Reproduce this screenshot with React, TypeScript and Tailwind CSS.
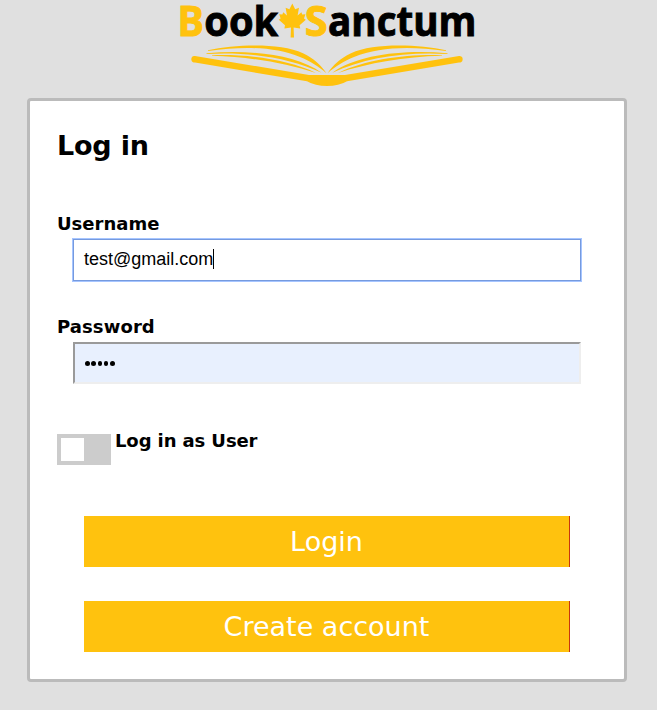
import React from "react";

const leaf =
  "M292.3 3.6 L295.2 9.2 L299 7.8 L297.6 15.4 L301.4 12.2 L302.2 14.6 L305.4 14.2 L304 18.4 L305.8 19.8 L299.6 25.2 L300.2 28.4 L293.6 27.6 L294 37.4 L290.6 37.4 L291 27.6 L284.4 28.4 L285 25.2 L278.8 19.8 L280.6 18.4 L279.2 14.2 L282.4 14.6 L283.2 12.2 L287 15.4 L285.6 7.8 L289.4 9.2 Z";

function BookHalf() {
  return (
    <g>
      <path d="M195 56 C192 55.5 191 58 191.4 60 C191.8 62 193 62.4 195 62.6 L307 81.2 Q315 86 327.2 86 L327.2 75 L309 75 Z" />
      <path d="M208 50.2 C235 44.5 280 42.5 303 53.2 C314 58.5 321 65 326.4 73.2 C318 66 310 61 300 57 C275 47 245 45.8 208 51 Z" />
      <path d="M206.5 53.3 C250 49.5 296 54.5 321.6 72.7 C290 58 250 51.5 206.5 54 Z" />
      <path d="M212 55.2 C248 54 288 59.5 316 72.9 C285 63 250 56.8 212 55.8 Z" />
    </g>
  );
}

function Logo() {
  return (
    <svg className="block h-[98px] w-[657px]" viewBox="0 0 657 98" role="img" aria-label="Book Sanctum">
      <g fontFamily="'Open Sans','Noto Sans',sans-serif" fontWeight="700" fontSize="41" strokeWidth="0.9">
        <text x="177.6" y="36.2" fill="#ffc20e" stroke="#ffc20e" textLength="26.5" lengthAdjust="spacingAndGlyphs">B</text>
        <text x="204.3" y="36.2" fill="#000" stroke="#000" textLength="74" lengthAdjust="spacingAndGlyphs">ook</text>
        <text x="304.8" y="36.2" fill="#ffc20e" stroke="#ffc20e" textLength="23" lengthAdjust="spacingAndGlyphs">S</text>
        <text x="328" y="36.2" fill="#000" stroke="#000" textLength="148.5" lengthAdjust="spacingAndGlyphs">anctum</text>
      </g>
      <g fill="#ffc20e">
        <path d={leaf} />
        <BookHalf />
        <g transform="translate(654 0) scale(-1 1)">
          <BookHalf />
        </g>
      </g>
    </svg>
  );
}

export default function App() {
  return (
    <div className="h-[710px] w-[657px] overflow-hidden bg-[#e0e0e0] font-['DejaVu_Sans',sans-serif] text-black">
      <Logo />
      <main className="ml-[27px] h-[584px] w-[600px] rounded-[4px] border-[3px] border-[#bbbbbb] bg-white px-[27px]">
        <h1 className="pt-[29px] text-[27px] leading-[32px] font-bold tracking-[-0.2px]">Log in</h1>
        <label className="mt-[51px] block text-[18px] leading-[22px] font-bold">Username</label>
        <div className="mt-[3px] ml-[15px] flex h-[44px] w-[510px] items-center border border-[#a6c5ff]">
          <div className="flex h-[42px] w-[508px] items-center border border-[#769ade] pb-[2px] pl-[10px] font-['Liberation_Sans',sans-serif] text-[18px]">
            <span className="leading-[20px]">test@gmail.com</span>
            <span className="h-[20px] w-px bg-black" />
          </div>
        </div>
        <label className="mt-[34px] block text-[18px] leading-[22px] font-bold tracking-[0.1px]">Password</label>
        <div className="mt-[4px] ml-[16px] flex h-[42px] w-[508px] gap-[2px] border-2 border-t-[#9a9a9a] border-r-[#eeeeee] border-b-[#eeeeee] border-l-[#9a9a9a] bg-[#e8f0fe] pt-[17px] pl-[10px]">
          {[0, 1, 2, 3, 4].map((i) => (
            <span key={i} className="mr-[-0.2px] size-[4.5px] rounded-full bg-black" />
          ))}
        </div>
        <div className="mt-[50px] flex h-[31px] gap-[4px]">
          <div className="h-[31px] w-[54px] bg-[#cccccc] p-[4px]">
            <div className="size-[23px] bg-white" />
          </div>
          <span className="-mt-[4px] text-[18px] leading-[22px] font-bold tracking-[-0.1px]">Log in as User</span>
        </div>
        <div className="mt-[51px] ml-[27px] flex w-[486px] flex-col gap-[34px]">
          <button className="h-[51px] border-r border-[#c8380c] bg-[#ffc20e] text-[27px] leading-[51px] text-white">Login</button>
          <button className="h-[51px] border-r border-[#c8380c] bg-[#ffc20e] text-[27px] leading-[51px] text-white">Create account</button>
        </div>
      </main>
    </div>
  );
}
